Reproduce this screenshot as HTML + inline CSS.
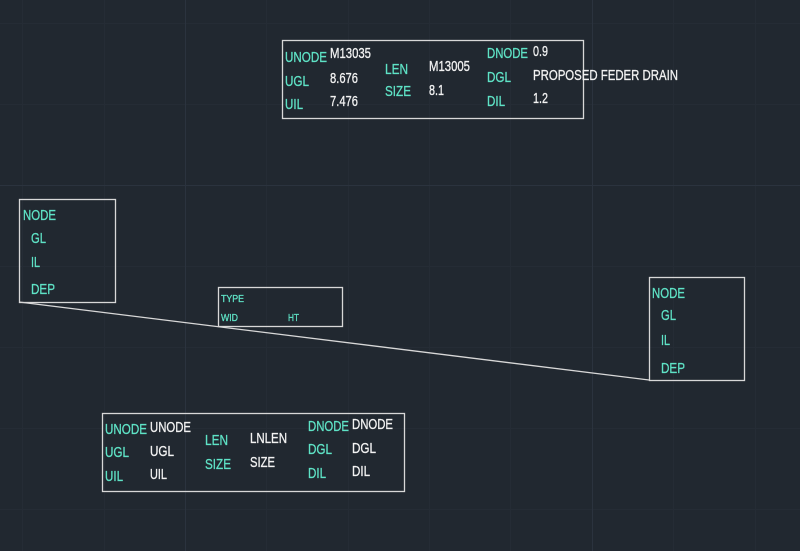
<!DOCTYPE html>
<html><head><style>html,body{margin:0;padding:0;background:#212830;}svg{display:block}</style></head><body>
<svg width="800" height="551" xmlns="http://www.w3.org/2000/svg" font-family="Liberation Sans, sans-serif">
<rect width="800" height="551" fill="#212830"/>
<g stroke="#252c35" stroke-width="1">
<path d="M22.5 0V551M104.5 0V551M266.5 0V551M348.5 0V551M429.5 0V551M510.5 0V551M673.5 0V551M755.5 0V551M0 23.5H800M0 104.5H800M0 266.5H800M0 347.5H800M0 428.5H800M0 509.5H800"/>
</g>
<g stroke="#2b333e" stroke-width="1"><path d="M185.5 0V551M592.5 0V551M0 185.5H800"/></g>
<g fill="none" stroke="#d8d8d8" stroke-width="1.3">
<rect x="282.5" y="40.5" width="301" height="78"/>
<rect x="19.5" y="199.5" width="96" height="103"/>
<rect x="218.5" y="287.5" width="124" height="39"/>
<rect x="649.5" y="277.5" width="95" height="103"/>
<rect x="102.5" y="413.5" width="302" height="78"/>
<path d="M19 302L649 380"/>
</g>
<g font-size="15" stroke-width="0.3">
<g fill="#5fe3c6" stroke="#5fe3c6">
<text x="285" y="62" textLength="42" lengthAdjust="spacingAndGlyphs">UNODE</text>
<text x="285" y="86" textLength="24" lengthAdjust="spacingAndGlyphs">UGL</text>
<text x="285" y="109" textLength="18" lengthAdjust="spacingAndGlyphs">UIL</text>
<text x="385" y="74" textLength="23" lengthAdjust="spacingAndGlyphs">LEN</text>
<text x="385" y="96" textLength="26" lengthAdjust="spacingAndGlyphs">SIZE</text>
<text x="487" y="58" textLength="41" lengthAdjust="spacingAndGlyphs">DNODE</text>
<text x="487" y="82" textLength="24" lengthAdjust="spacingAndGlyphs">DGL</text>
<text x="487" y="106" textLength="18" lengthAdjust="spacingAndGlyphs">DIL</text>

<text x="23" y="220" textLength="33" lengthAdjust="spacingAndGlyphs">NODE</text>
<text x="31" y="243" textLength="15" lengthAdjust="spacingAndGlyphs">GL</text>
<text x="31" y="267" textLength="9" lengthAdjust="spacingAndGlyphs">IL</text>
<text x="31" y="294" textLength="24" lengthAdjust="spacingAndGlyphs">DEP</text>

<text x="652" y="298" textLength="33" lengthAdjust="spacingAndGlyphs">NODE</text>
<text x="661" y="320" textLength="15" lengthAdjust="spacingAndGlyphs">GL</text>
<text x="661" y="345" textLength="9" lengthAdjust="spacingAndGlyphs">IL</text>
<text x="661" y="373" textLength="24" lengthAdjust="spacingAndGlyphs">DEP</text>

<text x="221" y="302" font-size="10" textLength="23" lengthAdjust="spacingAndGlyphs">TYPE</text>
<text x="221" y="321" font-size="10" textLength="17" lengthAdjust="spacingAndGlyphs">WID</text>
<text x="288" y="321" font-size="10" textLength="11" lengthAdjust="spacingAndGlyphs">HT</text>

<text x="105" y="434" textLength="42" lengthAdjust="spacingAndGlyphs">UNODE</text>
<text x="105" y="457" textLength="24" lengthAdjust="spacingAndGlyphs">UGL</text>
<text x="105" y="481" textLength="18" lengthAdjust="spacingAndGlyphs">UIL</text>
<text x="205" y="445" textLength="23" lengthAdjust="spacingAndGlyphs">LEN</text>
<text x="205" y="469" textLength="26" lengthAdjust="spacingAndGlyphs">SIZE</text>
<text x="308" y="431" textLength="41" lengthAdjust="spacingAndGlyphs">DNODE</text>
<text x="308" y="454" textLength="24" lengthAdjust="spacingAndGlyphs">DGL</text>
<text x="308" y="478" textLength="18" lengthAdjust="spacingAndGlyphs">DIL</text>
</g>
<g fill="#f2f2f2" stroke="#f2f2f2">
<text x="330" y="58" textLength="41" lengthAdjust="spacingAndGlyphs">M13035</text>
<text x="330" y="83" textLength="28" lengthAdjust="spacingAndGlyphs">8.676</text>
<text x="330" y="106" textLength="28" lengthAdjust="spacingAndGlyphs">7.476</text>
<text x="429" y="71" textLength="41" lengthAdjust="spacingAndGlyphs">M13005</text>
<text x="429" y="95" textLength="15" lengthAdjust="spacingAndGlyphs">8.1</text>
<text x="533" y="56" textLength="15" lengthAdjust="spacingAndGlyphs">0.9</text>
<text x="533" y="80" textLength="145" lengthAdjust="spacingAndGlyphs">PROPOSED FEDER DRAIN</text>
<text x="533" y="103" textLength="15" lengthAdjust="spacingAndGlyphs">1.2</text>

<text x="150" y="432" textLength="41" lengthAdjust="spacingAndGlyphs">UNODE</text>
<text x="150" y="456" textLength="24" lengthAdjust="spacingAndGlyphs">UGL</text>
<text x="150" y="479" textLength="17" lengthAdjust="spacingAndGlyphs">UIL</text>
<text x="250" y="443" textLength="37" lengthAdjust="spacingAndGlyphs">LNLEN</text>
<text x="250" y="467" textLength="25" lengthAdjust="spacingAndGlyphs">SIZE</text>
<text x="352" y="429" textLength="41" lengthAdjust="spacingAndGlyphs">DNODE</text>
<text x="352" y="453" textLength="24" lengthAdjust="spacingAndGlyphs">DGL</text>
<text x="352" y="476" textLength="18" lengthAdjust="spacingAndGlyphs">DIL</text>
</g>
</g>
</svg>
</body></html>
